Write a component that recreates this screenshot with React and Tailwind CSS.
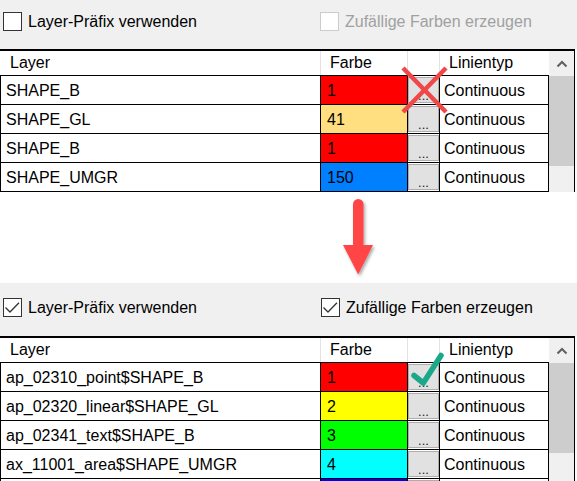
import React from "react";

const FONT = "font-['Liberation_Sans',Arial,sans-serif]";

function CheckBox({ checked, disabled }) {
  return (
    <span
      className={`relative flex h-[19px] w-[19px] shrink-0 items-center justify-center border bg-white ${
        disabled ? "border-[#cccccc]" : "border-[#333333]"
      }`}
    >
      {checked && (
        <svg width="17" height="17" viewBox="0 0 17 17" className="block">
          <polyline
            points="1.5,8.5 6,13 15,3.8"
            fill="none"
            stroke="#333333"
            strokeWidth="1.3"
          />
        </svg>
      )}
    </span>
  );
}

function Option({ label, checked, disabled, className }) {
  return (
    <div className={`flex items-center gap-[6px] ${className}`}>
      <CheckBox checked={checked} disabled={disabled} />
      <span
        className={`text-[16px] leading-[19px] ${
          disabled ? "text-[#a0a0a0]" : "text-black"
        }`}
      >
        {label}
      </span>
    </div>
  );
}

function Row({ layer, num, color, partial }) {
  return (
    <div className="flex h-[29px] border-b border-black text-[16px] text-black">
      <div className="flex w-[320px] items-center overflow-hidden whitespace-nowrap border-l border-black pl-[5px] pt-[1px]">
        {layer}
      </div>
      <div
        className="flex w-[87px] items-center border-l border-black pl-[6px] pt-[1px]"
        style={{ backgroundColor: color }}
      >
        {num}
      </div>
      <div className="flex w-[32px] border-l border-black bg-white py-[1px]">
        <div className="flex flex-1 items-end justify-center border border-[#adadad] bg-[#e1e1e1] text-[13px] leading-[13px] text-[#222]">
          {partial ? "" : "..."}
        </div>
      </div>
      <div className="flex w-[110px] items-center border-l border-r border-black bg-white pl-[4px] pt-[1px]">
        {partial ? "" : "Continuous"}
      </div>
    </div>
  );
}

function Table({ rows, children }) {
  return (
    <div className="relative flex w-[575px] border-t-2 border-black bg-white">
      <div className="flex flex-col">
        <div className="flex h-[25px] border-b border-black bg-white text-[16px] text-black">
          <div className="flex w-[320px] items-center pl-[10px]">Layer</div>
          <div className="flex w-[87px] items-center border-l border-[#e3e3e3] pl-[9px]">
            Farbe
          </div>
          <div className="w-[32px] border-l border-[#e3e3e3]" />
          <div className="flex w-[110px] items-center border-l border-[#e3e3e3] pl-[9px]">
            Linientyp
          </div>
        </div>
        {rows.map((r, i) => (
          <Row key={i} {...r} />
        ))}
      </div>
      <div className="flex w-[26px] flex-col border-r border-black bg-[#f0f0f0]">
        <div className="flex h-[25px] items-center justify-center">
          <svg width="12" height="8" viewBox="0 0 12 8">
            <polyline
              points="1.5,6.5 6,2 10.5,6.5"
              fill="none"
              stroke="#606060"
              strokeWidth="2"
            />
          </svg>
        </div>
        <div className="h-[90px] bg-[#cdcdcd]" />
        <div className="flex-1" />
      </div>
      {children}
    </div>
  );
}

export default function App() {
  const topRows = [
    { layer: "SHAPE_B", num: "1", color: "#ff0000" },
    { layer: "SHAPE_GL", num: "41", color: "#ffdf7f" },
    { layer: "SHAPE_B", num: "1", color: "#ff0000" },
    { layer: "SHAPE_UMGR", num: "150", color: "#007fff" },
  ];
  const bottomRows = [
    { layer: "ap_02310_point$SHAPE_B", num: "1", color: "#ff0000" },
    { layer: "ap_02320_linear$SHAPE_GL", num: "2", color: "#ffff00" },
    { layer: "ap_02341_text$SHAPE_B", num: "3", color: "#00ff00" },
    { layer: "ax_11001_area$SHAPE_UMGR", num: "4", color: "#00ffff" },
    { layer: "", num: "", color: "#0000ff", partial: true },
  ];

  return (
    <div className={`h-[481px] w-[577px] overflow-hidden bg-white ${FONT}`}>
      {/* top options */}
      <div className="flex h-[49px] bg-[#f0f0f0] pt-[12px]">
        <Option label="Layer-Präfix verwenden" className="ml-[3px] w-[317px] self-start" />
        <Option label="Zufällige Farben erzeugen" disabled className="self-start" />
      </div>

      <Table rows={topRows}>
        <svg
          className="absolute left-[398px] top-[12px]"
          width="54"
          height="54"
          viewBox="0 0 54 54"
        >
          <line x1="5" y1="5" x2="48" y2="49" stroke="#f04848" strokeWidth="4.5" />
          <line x1="48" y1="5" x2="5" y2="49" stroke="#f04848" strokeWidth="4.5" />
        </svg>
      </Table>

      {/* arrow */}
      <div className="flex h-[91px] bg-white">
        <svg
          className="ml-[340px] mt-[3px]"
          width="44"
          height="86"
          viewBox="0 0 44 86"
        >
          <defs>
            <filter id="sh" x="-30%" y="-10%" width="160%" height="130%">
              <feDropShadow dx="1.5" dy="2" stdDeviation="1.6" floodColor="#000" floodOpacity="0.35" />
            </filter>
          </defs>
          <g filter="url(#sh)" fill="#ff4444">
            <rect x="13" y="4" width="10.5" height="50" rx="5.25" />
            <polygon points="3,50 33,50 18.2,79.5" />
          </g>
        </svg>
      </div>

      {/* bottom options */}
      <div className="flex h-[53px] bg-[#f0f0f0] pt-[15px]">
        <Option label="Layer-Präfix verwenden" checked className="ml-[3px] w-[318px] self-start" />
        <Option label="Zufällige Farben erzeugen" checked className="self-start" />
      </div>

      <Table rows={bottomRows}>
        <svg
          className="absolute left-[405px] top-[11px]"
          width="42"
          height="42"
          viewBox="0 0 42 42"
        >
          <polyline
            points="9,26.5 18.3,34 36,6.5"
            fill="none"
            stroke="#19a88a"
            strokeWidth="5.5"
            strokeLinecap="round"
            strokeLinejoin="round"
          />
        </svg>
      </Table>
    </div>
  );
}
